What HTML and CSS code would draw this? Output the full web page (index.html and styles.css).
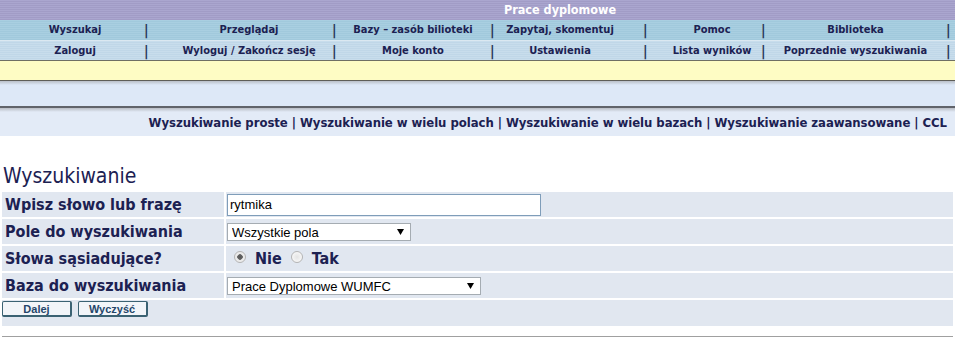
FILE: index.html
```html
<!DOCTYPE html>
<html lang="pl">
<head>
  <meta charset="UTF-8">
  <title>Prace dyplomowe - Wyszukiwanie</title>
  <link rel="stylesheet" href="styles.css">
</head>
<body>
  <div class="title">Prace dyplomowe</div>
  <div class="menu menu-top">
    <a class="c1" href="#">Wyszukaj</a><span class="sep">|</span>
    <a class="c2" href="#">Przeglądaj</a><span class="sep">|</span>
    <a class="c3" href="#">Bazy – zasób bilioteki</a><span class="sep">|</span>
    <a class="c4" href="#">Zapytaj, skomentuj</a><span class="sep">|</span>
    <a class="c5" href="#">Pomoc</a><span class="sep">|</span>
    <a class="c6" href="#">Biblioteka</a><span class="sep">|</span>
  </div>
  <div class="menu menu-bottom">
    <a class="c1" href="#">Zaloguj</a><span class="sep">|</span>
    <a class="c2" href="#">Wyloguj / Zakończ sesję</a><span class="sep">|</span>
    <a class="c3" href="#">Moje konto</a><span class="sep">|</span>
    <a class="c4" href="#">Ustawienia</a><span class="sep">|</span>
    <a class="c5" href="#">Lista wyników</a><span class="sep">|</span>
    <a class="c6" href="#">Poprzednie wyszukiwania</a><span class="sep">|</span>
  </div>
  <div class="note"></div>
  <div class="blank"></div>

  <div class="search-types">
    <a href="#">Wyszukiwanie proste</a> |
    <a href="#">Wyszukiwanie w wielu polach</a> |
    <a href="#">Wyszukiwanie w wielu bazach</a> |
    <a href="#">Wyszukiwanie zaawansowane</a> |
    <a href="#">CCL</a>
  </div>

  <h2 class="heading">Wyszukiwanie</h2>
  <form>
    <table class="search-form">
      <tr>
        <td class="label">Wpisz słowo lub frazę</td>
        <td><input type="text" class="text" value="rytmika"></td>
      </tr>
      <tr>
        <td class="label">Pole do wyszukiwania</td>
        <td>
          <select class="field">
            <option>Wszystkie pola</option>
          </select>
        </td>
      </tr>
      <tr>
        <td class="label">Słowa sąsiadujące?</td>
        <td class="radios">
          <label><input type="radio" name="adj" checked> Nie</label>
          <label><input type="radio" name="adj"> Tak</label>
        </td>
      </tr>
      <tr>
        <td class="label">Baza do wyszukiwania</td>
        <td>
          <select class="base">
            <option>Prace Dyplomowe WUMFC</option>
          </select>
        </td>
      </tr>
      <tr>
        <td colspan="2" class="buttons">
          <button type="button">Dalej</button>
          <button type="reset">Wyczyść</button>
        </td>
      </tr>
    </table>
  </form>
  <hr class="bottom-line">
</body>
</html>
```

FILE: styles.css
```css
body {
  margin: 0;
  font-family: "DejaVu Sans Condensed", "DejaVu Sans", sans-serif;
  color: #1c2152;
  background: #fff;
}
a {
  color: #1c2152;
  text-decoration: none;
}
.title {
  height: 20px;
  line-height: 20px;
  padding-left: 504px;
  color: #fff;
  font-weight: bold;
  font-size: 12.5px;
  background: repeating-linear-gradient(#aaa6cf 0, #aaa6cf 1px, #a19cc6 1px, #a19cc6 2px);
}
.menu {
  display: grid;
  grid-template-columns: 144px 4px 184px 4px 154px 4px 149px 4px 114px 4px 181px 4px 1fr;
  height: 20px;
  line-height: 20px;
  font-size: 11px;
  font-weight: bold;
}
.menu a {
  text-align: center;
}
.menu .sep {
  font-size: 14px;
  text-align: center;
  color: #2a3a5a;
}
.menu .c1 { padding-left: 6px; }
.menu .c2 { padding-left: 18px; }
.menu .c4 { padding-right: 17px; }
.menu .c5 { padding-left: 16px; }
.menu-top {
  background: repeating-linear-gradient(#a9cfe1 0, #a9cfe1 1px, #a1c9dc 1px, #a1c9dc 2px);
}
.menu-bottom {
  border-top: 1px solid #dbe8f1;
  height: 19px;
  background: repeating-linear-gradient(#c8ddec 0, #c8ddec 1px, #c0d7e8 1px, #c0d7e8 2px);
}
.note {
  height: 19px;
  background: #fefcc4;
  border-top: 1px solid #6f6f64;
  border-bottom: 1px solid #5e5e58;
}
.blank {
  height: 25px;
  background: linear-gradient(#b9bfc8 0, #dde8f7 4px, #dde8f7 100%);
  border-bottom: 2px solid #60636a;
}
.search-types {
  height: 28px;
  line-height: 29px;
  text-align: right;
  padding-right: 8px;
  font-size: 13px;
  font-weight: bold;
  letter-spacing: -0.05px;
  background: linear-gradient(#b8bcc4 0, #e3ebf7 4px, #e3ebf7 100%);
}
.heading {
  margin: 28px 0 0 3px;
  font-size: 21px;
  font-weight: normal;
  line-height: 24px;
}
.search-form {
  width: 100%;
  border-spacing: 2px;
  margin-top: 2px;
}
.search-form td {
  background: #e1e7f0;
  height: 25px;
  padding: 0 0 0 1px;
}
.search-form .label {
  width: 219px;
  padding-left: 3px;
  font-size: 16px;
  font-weight: bold;
}
.text {
  width: 314px;
  height: 22px;
  box-sizing: border-box;
  border: 1px solid #7f9db9;
  padding: 0 2px;
  font: 13px "Liberation Sans", Arial, sans-serif;
  color: #000;
}
select {
  appearance: none;
  height: 18px;
  box-sizing: border-box;
  border: 1px solid #a5acb2;
  border-radius: 0;
  padding: 0 0 0 4px;
  font: 13px "Liberation Sans", Arial, sans-serif;
  color: #000;
  background: #fff url("data:image/svg+xml,%3Csvg xmlns='http://www.w3.org/2000/svg' width='7' height='6'%3E%3Cpath d='M0 0h7L3.5 6z' fill='%23000'/%3E%3C/svg%3E") no-repeat right 6px center;
}
.field { width: 184px; }
.base { width: 254px; }
.radios {
  font-size: 16px;
  font-weight: bold;
}
.radios input {
  appearance: none;
  width: 12px;
  height: 12px;
  margin: 0 4px 0 7px;
  border: 1px solid #b4b4b4;
  border-radius: 50%;
  background: radial-gradient(circle, #e4e4e4 0, #f6f6f6 70%);
  vertical-align: 1px;
}
.radios input:checked {
  background: radial-gradient(circle, #555 0, #666 2.5px, #e8e8e8 3px, #f4f4f4 100%);
}
.radios label + label input {
  margin-left: 4px;
}
.buttons button {
  width: 70px;
  height: 16px;
  padding: 0;
  margin: 0 1px 0 0;
  border: 1px solid #3b6273;
  border-width: 1px 2px 2px 1px;
  border-radius: 2px;
  background: #f2f5f9;
  color: #24466a;
  font: bold 11px "Liberation Sans", Arial, sans-serif;
  vertical-align: top;
}
.search-form .buttons {
  padding: 1px 0 0 0;
  vertical-align: top;
}
.bottom-line {
  margin: 8px 2px 0;
  border: 0;
  border-top: 1px solid #a0a0a0;
}
```
